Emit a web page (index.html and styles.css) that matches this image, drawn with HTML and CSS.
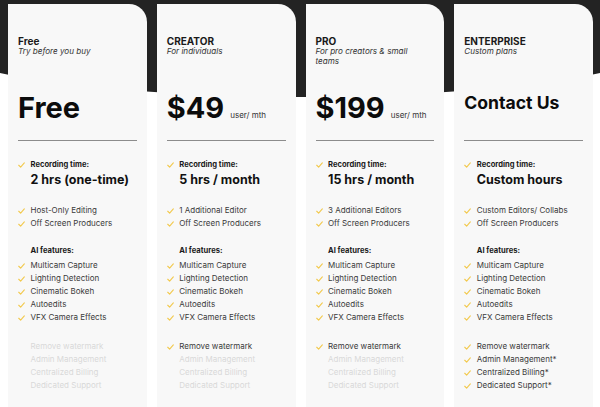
FILE: index.html
```html
<!DOCTYPE html>
<html>
<head>
<meta charset="utf-8">
<link rel="stylesheet" href="styles.css">
</head>
<body>
<div class="page">
  <div class="backdrop"></div>
  <div class="cards">
    <section class="card">
      <div class="head">
        <div class="name">Free</div>
        <div class="tag">Try before you buy</div>
      </div>
      <div class="price"><span class="amount">Free</span></div>
      <hr class="rule">
      <div class="rec">
        <div class="item label"><svg class="chk" viewBox="0 0 8 7"><path d="M0.8 3.8 L3 5.9 L7.3 1"/></svg>Recording time:</div>
        <div class="value">2 hrs (one-time)</div>
      </div>
      <ul class="list">
        <li class="item"><svg class="chk" viewBox="0 0 8 7"><path d="M0.8 3.8 L3 5.9 L7.3 1"/></svg>Host-Only Editing</li>
        <li class="item"><svg class="chk" viewBox="0 0 8 7"><path d="M0.8 3.8 L3 5.9 L7.3 1"/></svg>Off Screen Producers</li>
      </ul>
      <div class="ai">AI features:</div>
      <ul class="list">
        <li class="item"><svg class="chk" viewBox="0 0 8 7"><path d="M0.8 3.8 L3 5.9 L7.3 1"/></svg>Multicam Capture</li>
        <li class="item"><svg class="chk" viewBox="0 0 8 7"><path d="M0.8 3.8 L3 5.9 L7.3 1"/></svg>Lighting Detection</li>
        <li class="item"><svg class="chk" viewBox="0 0 8 7"><path d="M0.8 3.8 L3 5.9 L7.3 1"/></svg>Cinematic Bokeh</li>
        <li class="item"><svg class="chk" viewBox="0 0 8 7"><path d="M0.8 3.8 L3 5.9 L7.3 1"/></svg>Autoedits</li>
        <li class="item"><svg class="chk" viewBox="0 0 8 7"><path d="M0.8 3.8 L3 5.9 L7.3 1"/></svg>VFX Camera Effects</li>
      </ul>
      <ul class="list extras">
        <li class="item off">Remove watermark</li>
        <li class="item off">Admin Management</li>
        <li class="item off">Centralized Billing</li>
        <li class="item off">Dedicated Support</li>
      </ul>
    </section>

    <section class="card">
      <div class="head">
        <div class="name">CREATOR</div>
        <div class="tag">For individuals</div>
      </div>
      <div class="price"><span class="amount">$49</span><span class="unit">user/ mth</span></div>
      <hr class="rule">
      <div class="rec">
        <div class="item label"><svg class="chk" viewBox="0 0 8 7"><path d="M0.8 3.8 L3 5.9 L7.3 1"/></svg>Recording time:</div>
        <div class="value">5 hrs / month</div>
      </div>
      <ul class="list">
        <li class="item"><svg class="chk" viewBox="0 0 8 7"><path d="M0.8 3.8 L3 5.9 L7.3 1"/></svg>1 Additional Editor</li>
        <li class="item"><svg class="chk" viewBox="0 0 8 7"><path d="M0.8 3.8 L3 5.9 L7.3 1"/></svg>Off Screen Producers</li>
      </ul>
      <div class="ai">AI features:</div>
      <ul class="list">
        <li class="item"><svg class="chk" viewBox="0 0 8 7"><path d="M0.8 3.8 L3 5.9 L7.3 1"/></svg>Multicam Capture</li>
        <li class="item"><svg class="chk" viewBox="0 0 8 7"><path d="M0.8 3.8 L3 5.9 L7.3 1"/></svg>Lighting Detection</li>
        <li class="item"><svg class="chk" viewBox="0 0 8 7"><path d="M0.8 3.8 L3 5.9 L7.3 1"/></svg>Cinematic Bokeh</li>
        <li class="item"><svg class="chk" viewBox="0 0 8 7"><path d="M0.8 3.8 L3 5.9 L7.3 1"/></svg>Autoedits</li>
        <li class="item"><svg class="chk" viewBox="0 0 8 7"><path d="M0.8 3.8 L3 5.9 L7.3 1"/></svg>VFX Camera Effects</li>
      </ul>
      <ul class="list extras">
        <li class="item"><svg class="chk" viewBox="0 0 8 7"><path d="M0.8 3.8 L3 5.9 L7.3 1"/></svg>Remove watermark</li>
        <li class="item off">Admin Management</li>
        <li class="item off">Centralized Billing</li>
        <li class="item off">Dedicated Support</li>
      </ul>
    </section>

    <section class="card">
      <div class="head">
        <div class="name">PRO</div>
        <div class="tag">For pro creators &amp; small teams</div>
      </div>
      <div class="price"><span class="amount">$199</span><span class="unit">user/ mth</span></div>
      <hr class="rule">
      <div class="rec">
        <div class="item label"><svg class="chk" viewBox="0 0 8 7"><path d="M0.8 3.8 L3 5.9 L7.3 1"/></svg>Recording time:</div>
        <div class="value">15 hrs / month</div>
      </div>
      <ul class="list">
        <li class="item"><svg class="chk" viewBox="0 0 8 7"><path d="M0.8 3.8 L3 5.9 L7.3 1"/></svg>3 Additional Editors</li>
        <li class="item"><svg class="chk" viewBox="0 0 8 7"><path d="M0.8 3.8 L3 5.9 L7.3 1"/></svg>Off Screen Producers</li>
      </ul>
      <div class="ai">AI features:</div>
      <ul class="list">
        <li class="item"><svg class="chk" viewBox="0 0 8 7"><path d="M0.8 3.8 L3 5.9 L7.3 1"/></svg>Multicam Capture</li>
        <li class="item"><svg class="chk" viewBox="0 0 8 7"><path d="M0.8 3.8 L3 5.9 L7.3 1"/></svg>Lighting Detection</li>
        <li class="item"><svg class="chk" viewBox="0 0 8 7"><path d="M0.8 3.8 L3 5.9 L7.3 1"/></svg>Cinematic Bokeh</li>
        <li class="item"><svg class="chk" viewBox="0 0 8 7"><path d="M0.8 3.8 L3 5.9 L7.3 1"/></svg>Autoedits</li>
        <li class="item"><svg class="chk" viewBox="0 0 8 7"><path d="M0.8 3.8 L3 5.9 L7.3 1"/></svg>VFX Camera Effects</li>
      </ul>
      <ul class="list extras">
        <li class="item"><svg class="chk" viewBox="0 0 8 7"><path d="M0.8 3.8 L3 5.9 L7.3 1"/></svg>Remove watermark</li>
        <li class="item off">Admin Management</li>
        <li class="item off">Centralized Billing</li>
        <li class="item off">Dedicated Support</li>
      </ul>
    </section>

    <section class="card">
      <div class="head">
        <div class="name">ENTERPRISE</div>
        <div class="tag">Custom plans</div>
      </div>
      <div class="price"><span class="amount contact">Contact Us</span></div>
      <hr class="rule">
      <div class="rec">
        <div class="item label"><svg class="chk" viewBox="0 0 8 7"><path d="M0.8 3.8 L3 5.9 L7.3 1"/></svg>Recording time:</div>
        <div class="value">Custom hours</div>
      </div>
      <ul class="list">
        <li class="item"><svg class="chk" viewBox="0 0 8 7"><path d="M0.8 3.8 L3 5.9 L7.3 1"/></svg>Custom Editors/ Collabs</li>
        <li class="item"><svg class="chk" viewBox="0 0 8 7"><path d="M0.8 3.8 L3 5.9 L7.3 1"/></svg>Off Screen Producers</li>
      </ul>
      <div class="ai">AI features:</div>
      <ul class="list">
        <li class="item"><svg class="chk" viewBox="0 0 8 7"><path d="M0.8 3.8 L3 5.9 L7.3 1"/></svg>Multicam Capture</li>
        <li class="item"><svg class="chk" viewBox="0 0 8 7"><path d="M0.8 3.8 L3 5.9 L7.3 1"/></svg>Lighting Detection</li>
        <li class="item"><svg class="chk" viewBox="0 0 8 7"><path d="M0.8 3.8 L3 5.9 L7.3 1"/></svg>Cinematic Bokeh</li>
        <li class="item"><svg class="chk" viewBox="0 0 8 7"><path d="M0.8 3.8 L3 5.9 L7.3 1"/></svg>Autoedits</li>
        <li class="item"><svg class="chk" viewBox="0 0 8 7"><path d="M0.8 3.8 L3 5.9 L7.3 1"/></svg>VFX Camera Effects</li>
      </ul>
      <ul class="list extras">
        <li class="item"><svg class="chk" viewBox="0 0 8 7"><path d="M0.8 3.8 L3 5.9 L7.3 1"/></svg>Remove watermark</li>
        <li class="item"><svg class="chk" viewBox="0 0 8 7"><path d="M0.8 3.8 L3 5.9 L7.3 1"/></svg>Admin Management*</li>
        <li class="item"><svg class="chk" viewBox="0 0 8 7"><path d="M0.8 3.8 L3 5.9 L7.3 1"/></svg>Centralized Billing*</li>
        <li class="item"><svg class="chk" viewBox="0 0 8 7"><path d="M0.8 3.8 L3 5.9 L7.3 1"/></svg>Dedicated Support*</li>
      </ul>
    </section>
  </div>
</div>
</body>
</html>
```

FILE: styles.css
```css
html, body {
  margin: 0;
  padding: 0;
  background: #ffffff;
  overflow: hidden;
}
body {
  font-family: Inter, "Open Sans", "Liberation Sans", sans-serif;
  color: #111;
}
.page {
  position: relative;
  width: 600px;
  height: 407px;
  overflow: hidden;
}
.backdrop {
  position: absolute;
  left: -100px;
  top: -45px;
  width: 800px;
  height: 142px;
  border-radius: 50%;
  background: #232323;
}
.cards {
  position: relative;
  display: grid;
  grid-template-columns: repeat(4, 1fr);
  column-gap: 10px;
  padding: 4px 7px 0 8px;
}
.card {
  background: #f8f8f8;
  border-top-right-radius: 18px;
  padding: 31px 10px 0;
  height: 420px;
}
.head {
  height: 56px;
}
.name {
  font-size: 10px;
  line-height: 12px;
  font-weight: 700;
  color: #1a1a1a;
}
.tag {
  font-size: 8.1px;
  line-height: 9.5px;
  font-style: italic;
  color: #333;
  padding-right: 6px;
}
.price {
  display: flex;
  align-items: baseline;
  height: 49px;
}
.amount {
  font-size: 29px;
  line-height: 34px;
  font-weight: 700;
  color: #0c0c0c;
}
.amount.contact {
  font-size: 17.6px;
  line-height: 23px;
}
.unit {
  font-size: 8px;
  color: #333;
  margin-left: 6px;
}
.rule {
  border: 0;
  border-top: 1px solid #8c8c8c;
  margin: 0;
}
.rec {
  margin-top: 18px;
}
.item {
  display: flex;
  align-items: center;
  font-size: 8px;
  line-height: 13px;
  color: #3a3a3a;
  padding-left: 12.5px;
  position: relative;
  white-space: nowrap;
}
.item.label {
  font-weight: 700;
  font-size: 7.6px;
  line-height: 12px;
  color: #1a1a1a;
}
.chk {
  position: absolute;
  left: 0;
  top: 50%;
  margin-top: -3px;
  width: 7px;
  height: 6px;
  fill: none;
  stroke: #f2c94c;
  stroke-width: 1.3;
  stroke-linecap: round;
  stroke-linejoin: round;
}
.value {
  padding-left: 12.5px;
  font-size: 12.5px;
  line-height: 18px;
  font-weight: 700;
  color: #111;
}
.list {
  list-style: none;
  margin: 15px 0 0;
  padding: 0;
}
.ai {
  margin-top: 14px;
  padding-left: 12.5px;
  font-size: 7.6px;
  line-height: 13px;
  font-weight: 700;
  color: #1a1a1a;
}
.ai + .list {
  margin-top: 2px;
}
.list.extras {
  margin-top: 16px;
}
.item.off {
  color: #d9d9d9;
}
```
